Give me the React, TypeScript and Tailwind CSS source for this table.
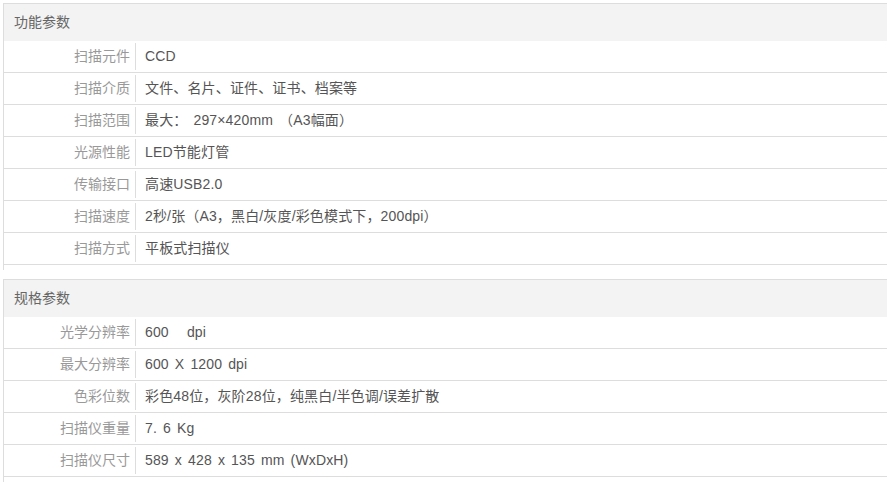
import React from 'react';

type Row = [string, string];

const sections: { title: string; rows: Row[] }[] = [
  {
    title: '功能参数',
    rows: [
      ['扫描元件', 'CCD'],
      ['扫描介质', '文件、名片、证件、证书、档案等'],
      ['扫描范围', '最大： 297×420mm （A3幅面）'],
      ['光源性能', 'LED节能灯管'],
      ['传输接口', '高速USB2.0'],
      ['扫描速度', '2秒/张（A3，黑白/灰度/彩色模式下，200dpi）'],
      ['扫描方式', '平板式扫描仪'],
    ],
  },
  {
    title: '规格参数',
    rows: [
      ['光学分辨率', '600\u00a0\u00a0\u00a0dpi'],
      ['最大分辨率', '600 X 1200 dpi'],
      ['色彩位数', '彩色48位，灰阶28位，纯黑白/半色调/误差扩散'],
      ['扫描仪重量', '7. 6 Kg'],
      ['扫描仪尺寸', '589 x 428 x 135 mm (WxDxH)'],
    ],
  },
];

function SpecSection({ title, rows }: { title: string; rows: Row[] }) {
  return (
    <div className="border-l border-[#ddd] pb-[5px] w-[884px]">
      <div className="h-[38px] border-t border-[#ddd] bg-[#f3f3f3] pl-[10px] flex items-center text-[14px] text-[#666]">
        {title}
      </div>
      {rows.map(([label, value]) => (
        <div key={label} className="h-[32px] border-b border-[#ddd] flex items-stretch text-[14px]">
          <div className="w-[132px] my-[2px] border-r border-[#ddd] flex items-center justify-end pr-[5px] text-[#999]">
            {label}
          </div>
          <div className="flex items-center pl-[9px] text-[#555] whitespace-pre [word-spacing:2px] tracking-[0.15px]">
            {value}
          </div>
        </div>
      ))}
    </div>
  );
}

export default function App() {
  return (
    <div
      className="min-h-screen bg-white pt-[3px] pl-[3px] flex flex-col gap-[9px]"
      style={{ fontFamily: '"Liberation Sans", "Noto Sans CJK SC", sans-serif' }}
    >
      {sections.map((s) => (
        <SpecSection key={s.title} title={s.title} rows={s.rows} />
      ))}
    </div>
  );
}
